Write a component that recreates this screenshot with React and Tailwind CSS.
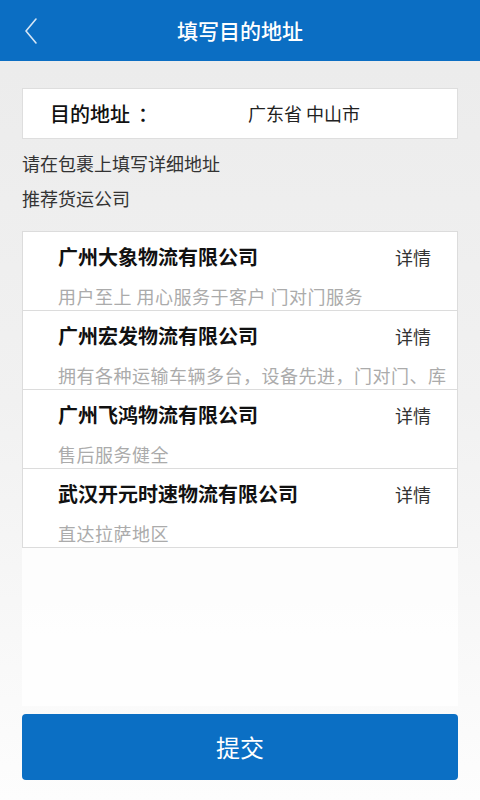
const companies = [
  { name: '广州大象物流有限公司', desc: '用户至上 用心服务于客户 门对门服务' },
  { name: '广州宏发物流有限公司', desc: '拥有各种运输车辆多台，设备先进，门对门、库' },
  { name: '广州飞鸿物流有限公司', desc: '售后服务健全' },
  { name: '武汉开元时速物流有限公司', desc: '直达拉萨地区' },
];

const font = { fontFamily: '"Noto Sans CJK SC", "Noto Sans", sans-serif' };

export default function App() {
  return (
    <div
      style={font}
      className="w-[480px] h-[800px] overflow-hidden bg-gradient-to-b from-[#ebebeb] via-[#f1f1f1] to-[#fdfdfd]"
    >
      {/* Header */}
      <div className="h-[61px] bg-[#0b6ec3] flex items-center relative">
        <svg className="absolute left-[23px] top-[17px]" width="16" height="28" viewBox="0 0 16 28" fill="none">
          <path d="M13 2 L3 14 L13 26" stroke="#d6e6f5" strokeWidth="1.6" strokeLinecap="round" strokeLinejoin="round" />
        </svg>
        <h1 className="w-full text-center text-white text-[21px] leading-none font-medium">填写目的地址</h1>
      </div>

      <div className="px-[22px]">
        {/* Address card */}
        <div className="mt-[27px] h-[51px] bg-white border border-[#dedede] flex items-center">
          <span className="ml-[27px] text-[20px] font-medium text-[#111]">目的地址</span>
          <span className="ml-[8px] text-[20px] font-medium text-[#111]">：</span>
          <span className="ml-[90px] text-[18px] text-[#222]">广东省 中山市</span>
        </div>

        <div className="mt-[12px] h-[24px] leading-[24px] text-[18px] text-[#333]">请在包裹上填写详细地址</div>
        <div className="mt-[11px] h-[24px] leading-[24px] text-[18px] text-[#333]">推荐货运公司</div>

        {/* Company list */}
        <div className="mt-[21px] bg-white border border-[#dcdcdc]">
          {companies.map((c, i) => (
            <div
              key={c.name}
              className={`h-[78px] pt-[13px] pl-[35px] pr-[8px] ${i < companies.length - 1 ? 'border-b border-[#dcdcdc] h-[79px]' : ''}`}
            >
              <div className="h-[24px] flex items-center justify-between pr-[18px]">
                <span className="text-[20px] font-bold text-[#111]">{c.name}</span>
                <span className="text-[18px] text-[#333]">详情</span>
              </div>
              <div className="mt-[15px] h-[24px] leading-[24px] text-[18px] tracking-[0.5px] text-[#ababab] whitespace-nowrap">
                {c.desc}
              </div>
            </div>
          ))}
        </div>
        <div className="h-[158px] bg-white/80" />

        {/* Submit */}
        <button className="mt-[8px] w-full h-[66px] rounded-[4px] bg-[#0b6fc4] text-white text-[24px] flex items-center justify-center">
          提交
        </button>
      </div>
    </div>
  );
}
